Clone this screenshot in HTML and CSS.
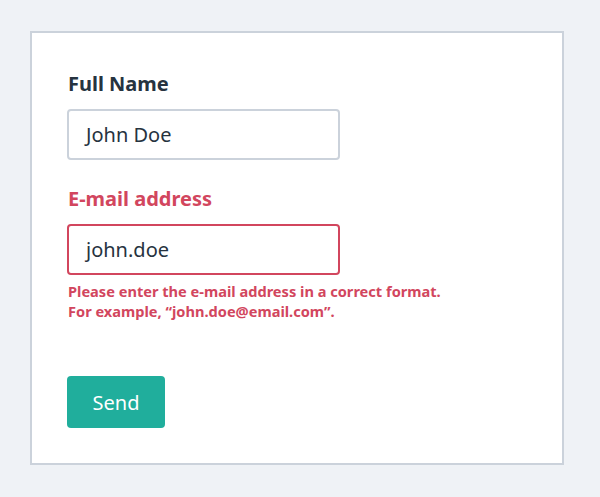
FILE: index.html
```html
<!DOCTYPE html>
<html>
<head>
<meta charset="utf-8">
<link rel="stylesheet" href="styles.css">
</head>
<body>
<div class="page">
  <form class="card">
    <div class="field">
      <label class="label">Full Name</label>
      <div class="input">John Doe</div>
    </div>
    <div class="field field-error">
      <label class="label">E-mail address</label>
      <div class="input">john.doe</div>
      <p class="error">Please enter the e-mail address in a correct format.<br>For example, “john.doe@email.com”.</p>
    </div>
    <div class="actions">
      <button type="button" class="btn">Send</button>
    </div>
  </form>
</div>
</body>
</html>
```
FILE: styles.css
```css
html, body {
  margin: 0;
  padding: 0;
}
body {
  background: #eff2f6;
  font-family: "Noto Sans", sans-serif;
  color: #263340;
}
.page {
  padding: 31px 36px 32px 30px;
}
.card {
  background: #fff;
  border: 2px solid #cbd2db;
  padding: 37px 36px 35px 35px;
  display: flex;
  flex-direction: column;
}
.field {
  display: flex;
  flex-direction: column;
}
.label {
  font-size: 20px;
  font-weight: 700;
  line-height: 28px;
  margin-bottom: 11px;
  padding-left: 1px;
  color: #263340;
}
.input {
  width: 236px;
  height: 47px;
  border: 2px solid #cbd2db;
  border-radius: 4px;
  padding: 0 16px 0 17px;
  font-size: 20px;
  line-height: 47px;
  color: #263340;
}
.field + .field {
  margin-top: 25px;
}
.field-error .label {
  color: #d2465e;
}
.field-error .input {
  border-color: #d2465e;
}
.error {
  margin: 6px 0 0;
  padding-left: 1px;
  font-size: 14.6px;
  font-weight: 700;
  line-height: 20px;
  color: #d2465e;
}
.actions {
  margin-top: 55px;
}
.btn {
  display: block;
  background: #20ae9c;
  color: #fff;
  border: none;
  border-radius: 4px;
  font-family: "Noto Sans", sans-serif;
  font-size: 20px;
  width: 98px;
  height: 52px;
  padding: 0;
}
```
